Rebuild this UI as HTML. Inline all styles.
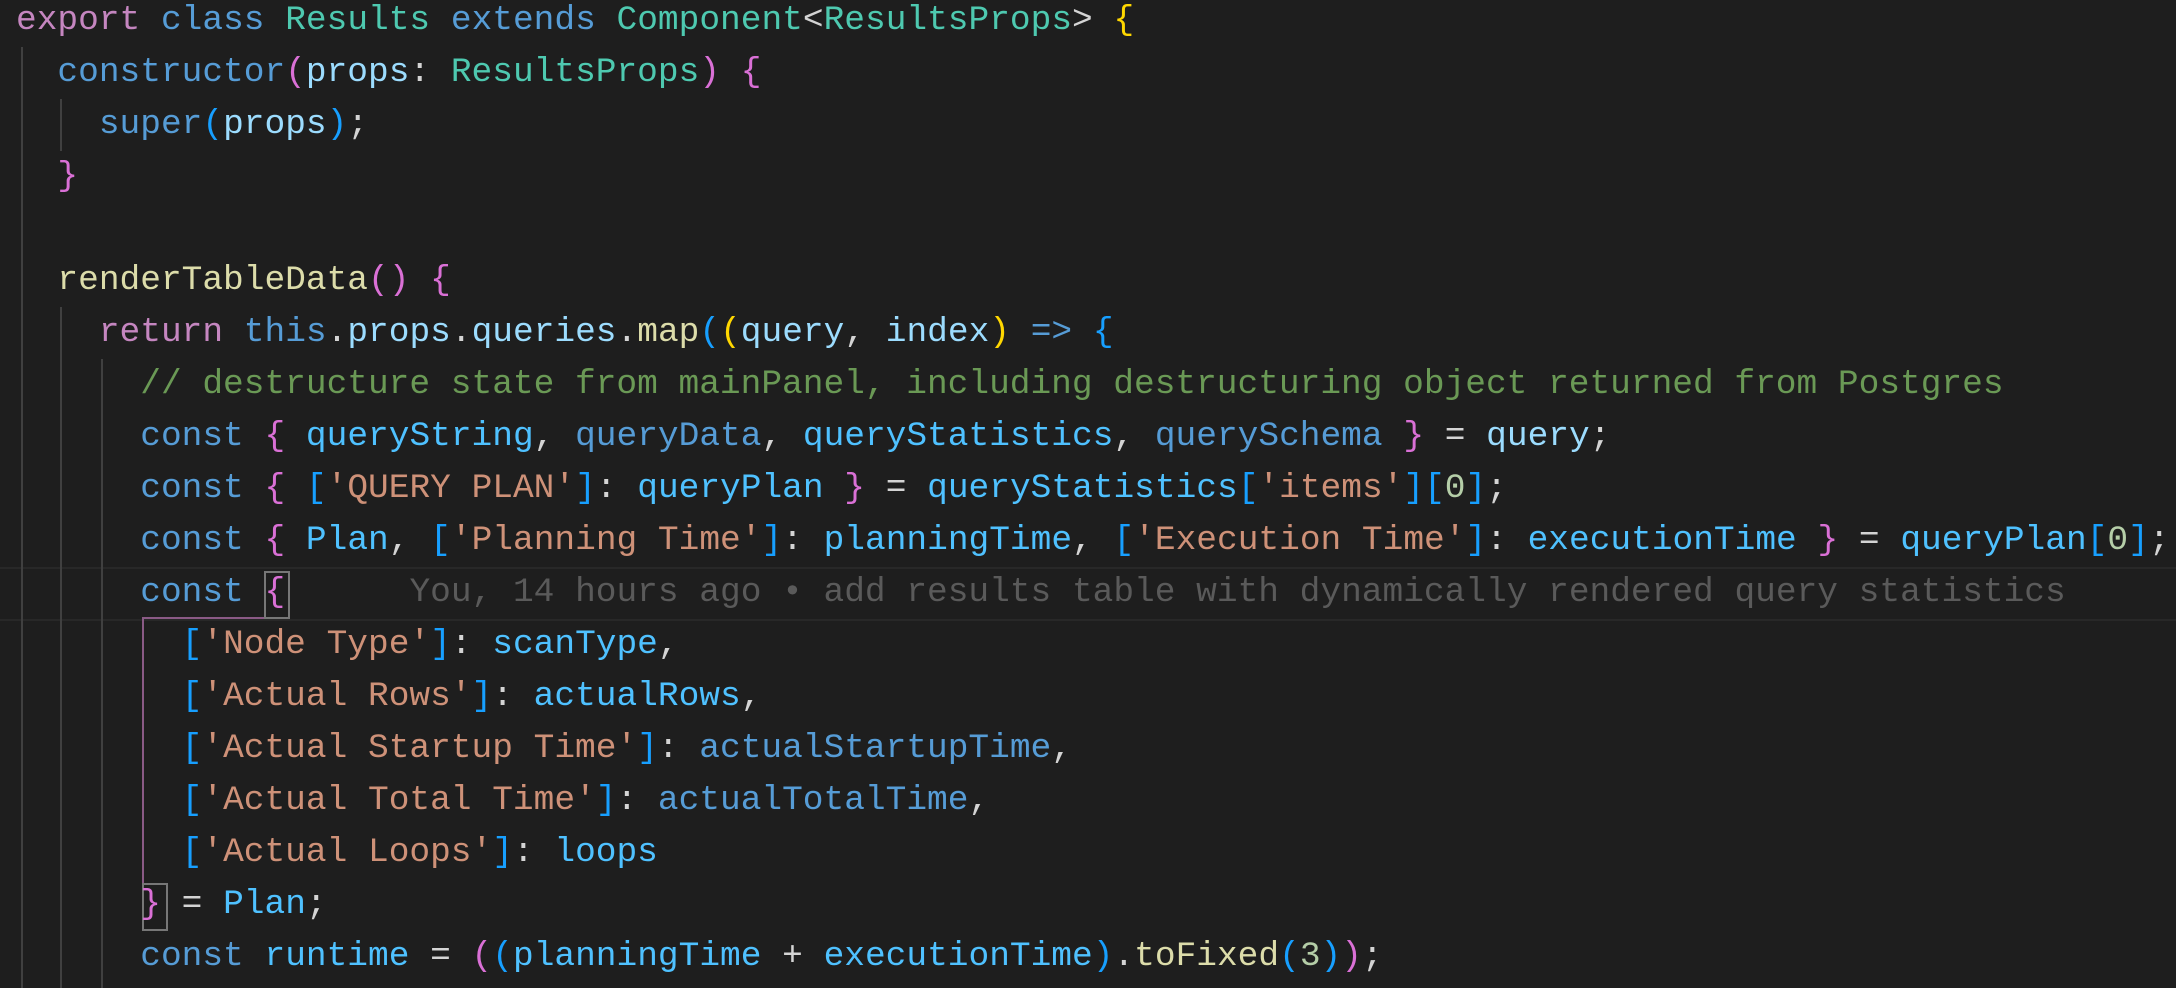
<!DOCTYPE html><html><head><meta charset="utf-8"><style>
body{margin:0;background:#1e1e1e;width:2176px;height:988px;overflow:hidden;position:relative}
pre{margin:0;position:absolute;left:16px;top:-5px;font-family:"Liberation Mono",monospace;font-size:34.5px;line-height:52px;color:#d4d4d4}
.k{color:#c586c0}.b{color:#569cd6}.t{color:#4ec9b0}.v{color:#9cdcfe}.f{color:#dcdcaa}.s{color:#ce9178}.c{color:#6a9955}.C{color:#4fc1ff}.g{color:#ffd700}.p{color:#da70d6}.q{color:#179fff}.n{color:#b5cea8}.bl{color:#5a5a5a}
.gd{position:absolute;width:2px;background:#404040}
.hl{position:absolute;left:0;right:0;top:567px;height:50px;border-top:2px solid #282828;border-bottom:2px solid #282828}
</style></head><body>
<div class="hl"></div>
<div class="gd" style="left:21px;top:47px;height:941px"></div>
<div class="gd" style="left:60px;top:99px;height:52px"></div>
<div class="gd" style="left:60px;top:307px;height:681px"></div>
<div class="gd" style="left:101px;top:359px;height:629px"></div>
<div class="gd" style="left:142px;top:619px;height:312px;background:#8a5a85"></div>
<div class="gd" style="left:142px;top:617px;height:2px;width:124px;background:#8a5a85"></div>
<div style="position:absolute;left:264px;top:571px;width:22px;height:44px;border:2px solid #777"></div>
<div style="position:absolute;left:142px;top:883px;width:22px;height:44px;border:2px solid #777"></div>
<pre><span class="k">export</span> <span class="b">class</span> <span class="t">Results</span> <span class="b">extends</span> <span class="t">Component</span>&lt;<span class="t">ResultsProps</span>&gt; <span class="g">{</span>
  <span class="b">constructor</span><span class="p">(</span><span class="v">props</span>: <span class="t">ResultsProps</span><span class="p">)</span> <span class="p">{</span>
    <span class="b">super</span><span class="q">(</span><span class="v">props</span><span class="q">)</span>;
  <span class="p">}</span>

  <span class="f">renderTableData</span><span class="p">()</span> <span class="p">{</span>
    <span class="k">return</span> <span class="b">this</span>.<span class="v">props</span>.<span class="v">queries</span>.<span class="f">map</span><span class="q">(</span><span class="g">(</span><span class="v">query</span>, <span class="v">index</span><span class="g">)</span> <span class="b">=&gt;</span> <span class="q">{</span>
      <span class="c">// destructure state from mainPanel, including destructuring object returned from Postgres</span>
      <span class="b">const</span> <span class="p">{</span> <span class="C">queryString</span>, <span class="b">queryData</span>, <span class="C">queryStatistics</span>, <span class="b">querySchema</span> <span class="p">}</span> = <span class="v">query</span>;
      <span class="b">const</span> <span class="p">{</span> <span class="q">[</span><span class="s">'QUERY PLAN'</span><span class="q">]</span>: <span class="C">queryPlan</span> <span class="p">}</span> = <span class="C">queryStatistics</span><span class="q">[</span><span class="s">'items'</span><span class="q">][</span><span class="n">0</span><span class="q">]</span>;
      <span class="b">const</span> <span class="p">{</span> <span class="C">Plan</span>, <span class="q">[</span><span class="s">'Planning Time'</span><span class="q">]</span>: <span class="C">planningTime</span>, <span class="q">[</span><span class="s">'Execution Time'</span><span class="q">]</span>: <span class="C">executionTime</span> <span class="p">}</span> = <span class="C">queryPlan</span><span class="q">[</span><span class="n">0</span><span class="q">]</span>;
      <span class="b">const</span> <span class="p">{</span>      <span class="bl">You, 14 hours ago • add results table with dynamically rendered query statistics</span>
        <span class="q">[</span><span class="s">'Node Type'</span><span class="q">]</span>: <span class="C">scanType</span>,
        <span class="q">[</span><span class="s">'Actual Rows'</span><span class="q">]</span>: <span class="C">actualRows</span>,
        <span class="q">[</span><span class="s">'Actual Startup Time'</span><span class="q">]</span>: <span class="b">actualStartupTime</span>,
        <span class="q">[</span><span class="s">'Actual Total Time'</span><span class="q">]</span>: <span class="b">actualTotalTime</span>,
        <span class="q">[</span><span class="s">'Actual Loops'</span><span class="q">]</span>: <span class="C">loops</span>
      <span class="p">}</span> = <span class="C">Plan</span>;
      <span class="b">const</span> <span class="C">runtime</span> = <span class="p">(</span><span class="q">(</span><span class="C">planningTime</span> + <span class="C">executionTime</span><span class="q">)</span>.<span class="f">toFixed</span><span class="q">(</span><span class="n">3</span><span class="q">)</span><span class="p">)</span>;
</pre>
</body></html>
